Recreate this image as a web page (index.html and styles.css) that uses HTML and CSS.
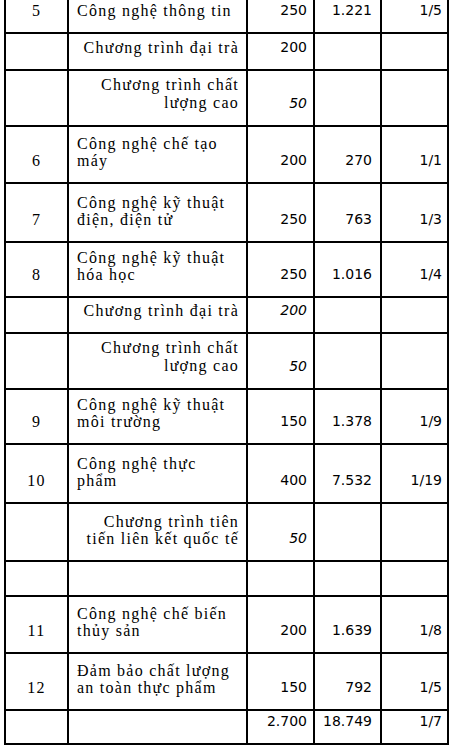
FILE: index.html
```html
<!DOCTYPE html>
<html lang="vi">
<head>
<meta charset="utf-8">
<title>Bảng chỉ tiêu</title>
<link rel="stylesheet" href="styles.css">
</head>
<body>
<table class="grid">
  <colgroup>
    <col class="c-stt">
    <col class="c-name">
    <col class="c-num">
    <col class="c-num">
    <col class="c-num">
  </colgroup>
  <tbody>
    <tr class="h36">
      <td class="stt">5</td>
      <td class="name">Công nghệ thông tin</td>
      <td class="n3">250</td>
      <td class="n4">1.221</td>
      <td class="n5">1/5</td>
    </tr>
    <tr class="h37">
      <td></td>
      <td class="name sub">Chương trình đại trà</td>
      <td class="n3">200</td>
      <td></td>
      <td></td>
    </tr>
    <tr class="h56">
      <td></td>
      <td class="name sub wide">Chương trình chất<br>lượng cao</td>
      <td class="n3 it">50</td>
      <td></td>
      <td></td>
    </tr>
    <tr class="h57">
      <td class="stt">6</td>
      <td class="name">Công nghệ chế tạo<br>máy</td>
      <td class="n3">200</td>
      <td class="n4">270</td>
      <td class="n5">1/1</td>
    </tr>
    <tr class="h59">
      <td class="stt">7</td>
      <td class="name">Công nghệ kỹ thuật<br>điện, điện tử</td>
      <td class="n3">250</td>
      <td class="n4">763</td>
      <td class="n5">1/3</td>
    </tr>
    <tr class="h55">
      <td class="stt">8</td>
      <td class="name">Công nghệ kỹ thuật<br>hóa học</td>
      <td class="n3">250</td>
      <td class="n4">1.016</td>
      <td class="n5">1/4</td>
    </tr>
    <tr class="h36">
      <td></td>
      <td class="name sub">Chương trình đại trà</td>
      <td class="n3 it">200</td>
      <td></td>
      <td></td>
    </tr>
    <tr class="h56">
      <td></td>
      <td class="name sub wide">Chương trình chất<br>lượng cao</td>
      <td class="n3 it">50</td>
      <td></td>
      <td></td>
    </tr>
    <tr class="h55">
      <td class="stt">9</td>
      <td class="name">Công nghệ kỹ thuật<br>môi trường</td>
      <td class="n3">150</td>
      <td class="n4">1.378</td>
      <td class="n5">1/9</td>
    </tr>
    <tr class="h59">
      <td class="stt">10</td>
      <td class="name">Công nghệ thực<br>phẩm</td>
      <td class="n3">400</td>
      <td class="n4">7.532</td>
      <td class="n5">1/19</td>
    </tr>
    <tr class="h58">
      <td></td>
      <td class="name sub">Chương trình tiên<br>tiến liên kết quốc tế</td>
      <td class="n3 it">50</td>
      <td></td>
      <td></td>
    </tr>
    <tr class="h35">
      <td></td>
      <td></td>
      <td></td>
      <td></td>
      <td></td>
    </tr>
    <tr class="h57">
      <td class="stt">11</td>
      <td class="name">Công nghệ chế biến<br>thủy sản</td>
      <td class="n3">200</td>
      <td class="n4">1.639</td>
      <td class="n5">1/8</td>
    </tr>
    <tr class="h57">
      <td class="stt">12</td>
      <td class="name">Đảm bảo chất lượng<br>an toàn thực phẩm</td>
      <td class="n3">150</td>
      <td class="n4">792</td>
      <td class="n5">1/5</td>
    </tr>
    <tr class="h34">
      <td></td>
      <td></td>
      <td class="n3">2.700</td>
      <td class="n4">18.749</td>
      <td class="n5">1/7</td>
    </tr>
  </tbody>
</table>
</body>
</html>
```

FILE: styles.css
```css
html, body {
  margin: 0;
  padding: 0;
  background: #fff;
}

.grid {
  border-collapse: collapse;
  table-layout: fixed;
  width: 445px;
  margin: -4px 0 0 4px;
  color: #000;
}

.c-stt { width: 63px; }
.c-name { width: 179px; }
.c-num { width: 67px; }

.grid td {
  border: 2px solid #000;
  padding: 0 0 13px 0;
  vertical-align: bottom;
  font-family: "Liberation Serif", "Times New Roman", serif;
  font-size: 16px;
  line-height: 17px;
  letter-spacing: 1.25px;
  white-space: nowrap;
}

.grid td.stt {
  text-align: center;
}

.grid td.name {
  text-align: left;
  padding-left: 8px;
}

.grid td.sub {
  text-align: right;
  padding-left: 0;
  padding-right: 7px;
}

.grid td.wide {
  line-height: 18px;
}

.grid td.n3,
.grid td.n4,
.grid td.n5 {
  font-family: "DejaVu Sans", Verdana, sans-serif;
  font-size: 14px;
  letter-spacing: 0;
  text-align: right;
}

.grid td.n3 { padding-right: 6px; }
.grid td.n4 { padding-right: 8px; }
.grid td.n5 { padding-right: 5px; }

.grid td.it { font-style: italic; }

.h34 { height: 34px; }
.h35 { height: 35px; }
.h36 { height: 36px; }
.h37 { height: 37px; }
.h55 { height: 55px; }
.h56 { height: 56px; }
.h57 { height: 57px; }
.h58 { height: 58px; }
.h59 { height: 59px; }
```
